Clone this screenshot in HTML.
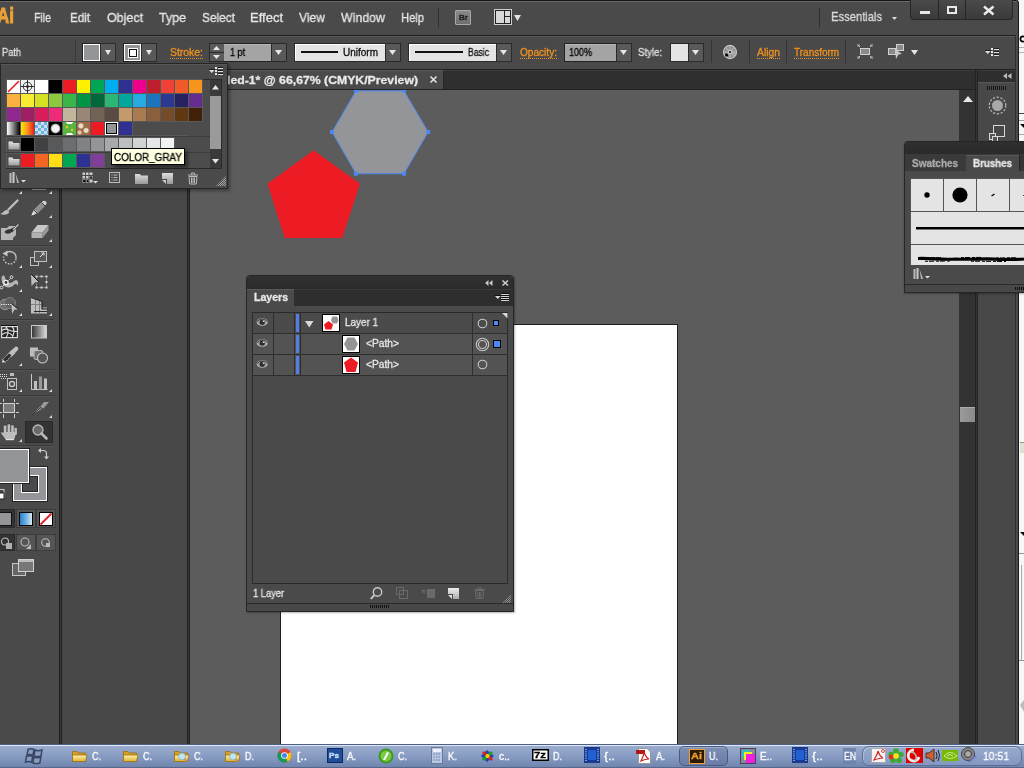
<!DOCTYPE html>
<html><head><meta charset="utf-8">
<style>
*{margin:0;padding:0;box-sizing:border-box}
html,body{width:1024px;height:768px;overflow:hidden;background:#4a4a4a;font-family:"Liberation Sans",sans-serif;position:relative}
.a{position:absolute}
.t{position:absolute;white-space:nowrap;line-height:1;transform-origin:0 0;will-change:transform;-webkit-text-stroke:0.3px currentColor}
svg{overflow:visible}
</style></head><body>
<div class="a" style="left:1018px;top:0px;width:6px;height:744px;background:#f6f6f4;"></div>
<svg class="a" style="left:1019px;top:0px;" width="5" height="744" viewBox="0 0 5 744"><circle cx="4" cy="39" r="2.6" fill="none" stroke="#000" stroke-width="1.6"/><path d="M0 47.5H5M0 52.5H5" stroke="#b8b4a8"/><path d="M0 113.5H5" stroke="#444"/><path d="M0 120.5H5" stroke="#999"/><path d="M1 124L5 128V124Z" fill="#000"/><path d="M0 134.5H5" stroke="#aaa"/><rect x="1" y="442" width="4" height="11" fill="#e2ded2"/><path d="M1 442.5H5" stroke="#999"/><path d="M1 532L5 536V532Z" fill="#000"/><path d="M0 553.5H5" stroke="#999"/><path d="M2.5 565V660" stroke="#aaa"/><path d="M0 660.5H5" stroke="#999"/><path d="M1 705L5 700V712Z" fill="#bbb"/></svg>
<div class="a" style="left:0px;top:0px;width:1019px;height:744px;background:#4a4a4a;border-top-right-radius:6px"></div>
<div class="a" style="left:0px;top:0px;width:1016px;height:1px;background:#141414;"></div>
<div class="a" style="left:0px;top:1px;width:1016px;height:1px;background:#6a6a6a;"></div>
<div class="t" style="left:-3.00px;top:5.38px;font-size:22px;color:#eda238;font-weight:bold;transform:scaleX(0.7727);-webkit-text-stroke:0.9px #eda238;">Ai</div>
<div class="t" style="left:34.00px;top:11.00px;font-size:13px;color:#e6e6e6;transform:scaleX(0.8117);">File</div>
<div class="t" style="left:70.00px;top:11.00px;font-size:13px;color:#e6e6e6;transform:scaleX(0.8929);">Edit</div>
<div class="t" style="left:107.00px;top:11.00px;font-size:13px;color:#e6e6e6;transform:scaleX(0.9582);">Object</div>
<div class="t" style="left:159.00px;top:11.00px;font-size:13px;color:#e6e6e6;transform:scaleX(0.9580);">Type</div>
<div class="t" style="left:202.00px;top:11.00px;font-size:13px;color:#e6e6e6;transform:scaleX(0.9134);">Select</div>
<div class="t" style="left:250.00px;top:11.00px;font-size:13px;color:#e6e6e6;">Effect</div>
<div class="t" style="left:299.00px;top:11.00px;font-size:13px;color:#e6e6e6;transform:scaleX(0.9294);">View</div>
<div class="t" style="left:341.00px;top:11.00px;font-size:13px;color:#e6e6e6;transform:scaleX(0.9510);">Window</div>
<div class="t" style="left:401.00px;top:11.00px;font-size:13px;color:#e6e6e6;transform:scaleX(0.8601);">Help</div>
<div class="a" style="left:438px;top:8px;width:1px;height:20px;background:#303030;"></div>
<div class="a" style="left:455px;top:10px;width:16px;height:15px;background:linear-gradient(#8a8a8a,#6e6e6e);border:1px solid #a8a8a8;border-radius:1px"></div>
<div class="t" style="left:459.00px;top:14.23px;font-size:8px;color:#222;font-weight:bold;transform:scaleX(1.0126);">Br</div>
<div class="a" style="left:494px;top:9px;width:18px;height:16px;background:#222;border:1px solid #cfcfcf"></div>
<div class="a" style="left:496px;top:11px;width:8px;height:12px;background:#d8d8d8;"></div>
<div class="a" style="left:505px;top:11px;width:5px;height:5px;background:#d8d8d8;"></div>
<div class="a" style="left:505px;top:17px;width:5px;height:6px;background:#d8d8d8;"></div>
<svg class="a" style="left:514px;top:15px;" width="8" height="7" viewBox="0 0 8 7"><path d="M0 0H7L3.5 6Z" fill="#e0e0e0"/></svg>
<div class="a" style="left:819px;top:8px;width:1px;height:20px;background:#303030;"></div>
<div class="t" style="left:831.00px;top:10.00px;font-size:13px;color:#dcdcdc;transform:scaleX(0.8607);">Essentials</div>
<svg class="a" style="left:892px;top:17px;" width="6" height="4" viewBox="0 0 6 4"><path d="M0 0H5L2.5 3Z" fill="#e0e0e0"/></svg>
<div class="a" style="left:910px;top:0px;width:103px;height:20px;background:linear-gradient(#4a4a4a,#3a3a3a);border:1px solid #262626;border-top:none;border-radius:0 0 4px 4px"></div>
<div class="a" style="left:938px;top:0px;width:1px;height:19px;background:#262626;"></div>
<div class="a" style="left:965px;top:0px;width:1px;height:19px;background:#262626;"></div>
<div class="a" style="left:920px;top:11px;width:10px;height:3px;background:#e8e8e8;"></div>
<div class="a" style="left:947px;top:6px;width:10px;height:8px;border:2px solid #e8e8e8;border-top-width:2px"></div>
<svg class="a" style="left:983px;top:6px;" width="12" height="9" viewBox="0 0 12 9"><path d="M1 0.5L10.5 8.5M10.5 0.5L1 8.5" stroke="#ececec" stroke-width="2.4"/></svg>
<div class="a" style="left:0px;top:35px;width:1016px;height:1px;background:#202020;"></div>
<div class="a" style="left:0px;top:36px;width:1015px;height:33px;background:#494949;border-top:1px solid #5a5a5a"></div>
<div class="a" style="left:0px;top:69px;width:1016px;height:1px;background:#202020;"></div>
<div class="t" style="left:2.00px;top:47.53px;font-size:10px;color:#e0e0e0;transform:scaleX(0.9237);">Path</div>
<div class="a" style="left:75px;top:40px;width:1px;height:23px;background:#3a3a3a;"></div>
<div class="a" style="left:82px;top:43px;width:19px;height:19px;background:#939598;border:1px solid #222;box-shadow:inset 0 0 0 1px #fff"></div>
<div class="a" style="left:100px;top:43px;width:16px;height:19px;background:#595959;border:1px solid #2c2c2c"></div>
<svg class="a" style="left:105px;top:50px;" width="7" height="5" viewBox="0 0 7 5"><path d="M0 0H6L3 5Z" fill="#e6e6e6"/></svg>
<div class="a" style="left:123px;top:43px;width:19px;height:19px;background:#939598;border:1px solid #222;box-shadow:inset 0 0 0 1px #fff"></div>
<div class="a" style="left:128px;top:48px;width:10px;height:10px;background:#fff;border:1px solid #fff;box-shadow:inset 0 0 0 1px #111"></div>
<div class="a" style="left:141px;top:43px;width:16px;height:19px;background:#595959;border:1px solid #2c2c2c"></div>
<svg class="a" style="left:146px;top:50px;" width="7" height="5" viewBox="0 0 7 5"><path d="M0 0H6L3 5Z" fill="#e6e6e6"/></svg>
<div class="t" style="left:170.00px;top:47.53px;font-size:10px;color:#f0921e;transform:scaleX(1.0417);">Stroke:</div>
<div class="a" style="left:170px;top:58px;width:33px;height:1px;background:repeating-linear-gradient(90deg,#f0921e 0 1px,transparent 1px 2px)"></div>
<div class="a" style="left:209px;top:43px;width:16px;height:19px;background:#5a5a5a;border:1px solid #2a2a2a"></div>
<div class="a" style="left:210px;top:52px;width:14px;height:1px;background:#2a2a2a;"></div>
<svg class="a" style="left:213px;top:46px;" width="8" height="5" viewBox="0 0 8 5"><path d="M0 4H7L3.5 0Z" fill="#e6e6e6"/></svg>
<svg class="a" style="left:213px;top:55px;" width="8" height="5" viewBox="0 0 8 5"><path d="M0 0H7L3.5 4Z" fill="#e6e6e6"/></svg>
<div class="a" style="left:224px;top:43px;width:48px;height:19px;background:#a4a4a4;border:1px solid #222;border-left:none;box-shadow:inset 0 1px 0 #b8b8b8"></div>
<div class="t" style="left:230.00px;top:47.53px;font-size:10px;color:#000;transform:scaleX(0.8993);">1 pt</div>
<div class="a" style="left:271px;top:43px;width:16px;height:19px;background:#595959;border:1px solid #2a2a2a"></div>
<svg class="a" style="left:275px;top:50px;" width="7" height="5" viewBox="0 0 7 5"><path d="M0 0H7L3.5 5Z" fill="#e6e6e6"/></svg>
<div class="a" style="left:294px;top:43px;width:92px;height:19px;background:#e4e4e4;border:1px solid #2a2a2a;box-shadow:inset 1px 1px 0 #fff"></div>
<div class="a" style="left:301px;top:51px;width:37px;height:2px;background:#111;"></div>
<div class="t" style="left:343.00px;top:47.53px;font-size:10px;color:#111;">Uniform</div>
<div class="a" style="left:385px;top:43px;width:16px;height:19px;background:#595959;border:1px solid #2a2a2a"></div>
<svg class="a" style="left:389px;top:50px;" width="7" height="5" viewBox="0 0 7 5"><path d="M0 0H7L3.5 5Z" fill="#e6e6e6"/></svg>
<div class="a" style="left:408px;top:43px;width:89px;height:19px;background:#e4e4e4;border:1px solid #2a2a2a;box-shadow:inset 1px 1px 0 #fff"></div>
<div class="a" style="left:415px;top:51px;width:48px;height:2px;background:#111;"></div>
<div class="t" style="left:468.00px;top:47.53px;font-size:10px;color:#111;transform:scaleX(0.8589);">Basic</div>
<div class="a" style="left:496px;top:43px;width:16px;height:19px;background:#595959;border:1px solid #2a2a2a"></div>
<svg class="a" style="left:500px;top:50px;" width="7" height="5" viewBox="0 0 7 5"><path d="M0 0H7L3.5 5Z" fill="#e6e6e6"/></svg>
<div class="t" style="left:520.00px;top:47.53px;font-size:10px;color:#f0921e;transform:scaleX(1.0087);">Opacity:</div>
<div class="a" style="left:520px;top:58px;width:37px;height:1px;background:repeating-linear-gradient(90deg,#f0921e 0 1px,transparent 1px 2px)"></div>
<div class="a" style="left:564px;top:43px;width:53px;height:19px;background:#a4a4a4;border:1px solid #222;box-shadow:inset 0 1px 0 #b8b8b8"></div>
<div class="t" style="left:569.00px;top:47.53px;font-size:10px;color:#000;transform:scaleX(0.8991);">100%</div>
<div class="a" style="left:616px;top:43px;width:16px;height:19px;background:#595959;border:1px solid #2a2a2a"></div>
<svg class="a" style="left:620px;top:50px;" width="7" height="5" viewBox="0 0 7 5"><path d="M0 0H7L3.5 5Z" fill="#e6e6e6"/></svg>
<div class="t" style="left:638.00px;top:47.53px;font-size:10px;color:#e0e0e0;transform:scaleX(0.9596);">Style:</div>
<div class="a" style="left:670px;top:43px;width:19px;height:19px;background:#e4e4e4;border:1px solid #2a2a2a"></div>
<div class="a" style="left:688px;top:43px;width:16px;height:19px;background:#595959;border:1px solid #2a2a2a"></div>
<svg class="a" style="left:692px;top:50px;" width="7" height="5" viewBox="0 0 7 5"><path d="M0 0H7L3.5 5Z" fill="#e6e6e6"/></svg>
<div class="a" style="left:711px;top:40px;width:1px;height:23px;background:#353535;"></div>
<svg class="a" style="left:722px;top:44px;" width="16" height="16" viewBox="0 0 16 16"><circle cx="8" cy="7.6" r="7.2" fill="#222" opacity="0.6"/><circle cx="8" cy="8" r="6.6" fill="#8c8c8c" stroke="#c8c8c8" stroke-width="1.1"/><path d="M8 2V14M2 8H14M3.8 3.8L12.2 12.2M12.2 3.8L3.8 12.2" stroke="#b0b0b0" stroke-width="1.4"/><path d="M8 8L13.8 6A6 6 0 0 1 13 11.5Z" fill="#aaa"/><circle cx="8" cy="8" r="1.8" fill="#ddd"/><circle cx="8" cy="8" r="1.1" fill="#111"/><circle cx="4.6" cy="11" r="1.6" fill="#000"/></svg>
<div class="a" style="left:749px;top:40px;width:1px;height:23px;background:#353535;"></div>
<div class="t" style="left:757.00px;top:47.53px;font-size:10px;color:#f0921e;transform:scaleX(1.0342);">Align</div>
<div class="a" style="left:757px;top:58px;width:23px;height:1px;background:repeating-linear-gradient(90deg,#f0921e 0 1px,transparent 1px 2px)"></div>
<div class="a" style="left:786px;top:40px;width:1px;height:23px;background:#353535;"></div>
<div class="t" style="left:794.00px;top:47.53px;font-size:10px;color:#f0921e;">Transform</div>
<div class="a" style="left:794px;top:58px;width:45px;height:1px;background:repeating-linear-gradient(90deg,#f0921e 0 1px,transparent 1px 2px)"></div>
<div class="a" style="left:845px;top:40px;width:1px;height:23px;background:#353535;"></div>
<svg class="a" style="left:857px;top:44px;" width="16" height="15" viewBox="0 0 16 15"><rect x="3.5" y="4.5" width="9" height="6" fill="#8a8a8a" stroke="#d0d0d0"/><path d="M0.5 0.5L3 3M15.5 0.5L13 3M0.5 14.5L3 12M15.5 14.5L13 12" stroke="#d0d0d0"/><path d="M0 2H2V0M16 2H14V0M0 13H2V15M16 13H14V15" stroke="#bbb" fill="none" stroke-width="0.8"/></svg>
<svg class="a" style="left:888px;top:44px;" width="17" height="15" viewBox="0 0 17 15"><rect x="0.5" y="4.5" width="7" height="6" fill="#8a8a8a" stroke="#d0d0d0"/><rect x="8.5" y="0.5" width="7" height="6" fill="#8a8a8a" stroke="#d0d0d0"/><path d="M7 5L14 10L10.5 10.5L8 15Z" fill="#c8c8c8"/></svg>
<svg class="a" style="left:911px;top:50px;" width="7" height="5" viewBox="0 0 7 5"><path d="M0 0H7L3.5 5Z" fill="#e6e6e6"/></svg>
<svg class="a" style="left:985px;top:48px;" width="15" height="9" viewBox="0 0 15 9"><rect x="0" y="2" width="6" height="1" fill="#1e1e1e"/><path d="M0 3H5.5L2.75 6Z" fill="#e0e0e0"/><rect x="6" y="0" width="2" height="2" fill="#e6e6e6"/><rect x="6" y="3" width="2" height="2" fill="#e6e6e6"/><rect x="6" y="6" width="2" height="2" fill="#e6e6e6"/><rect x="9" y="0" width="5" height="1" fill="#1e1e1e"/><rect x="9" y="3" width="5" height="1" fill="#1e1e1e"/><rect x="9" y="6" width="5" height="1" fill="#1e1e1e"/><rect x="9" y="1" width="5" height="1" fill="#e0e0e0"/><rect x="9" y="4" width="5" height="1" fill="#e0e0e0"/><rect x="9" y="7" width="5" height="1" fill="#e0e0e0"/></svg>
<div class="a" style="left:62px;top:70px;width:915px;height:20px;background:#2f2f2f;border-top:1px solid #3a3a3a;border-bottom:1px solid #232323"></div>
<div class="a" style="left:62px;top:70px;width:382px;height:19px;background:#4a4a4a;border-top:1px solid #5a5a5a;border-right:1px solid #262626"></div>
<div class="t" style="left:227.00px;top:74.69px;font-size:11px;color:#e8e8e8;font-weight:bold;transform:scaleX(1.1136);">led-1* @ 66,67% (CMYK/Preview)</div>
<svg class="a" style="left:430px;top:76px;" width="7" height="7" viewBox="0 0 7 7"><path d="M0.5 0.5L6.5 6.5M6.5 0.5L0.5 6.5" stroke="#e0e0e0" stroke-width="1.6"/></svg>
<div class="a" style="left:0px;top:70px;width:59px;height:674px;background:#4a4a4a;"></div>
<div class="a" style="left:59px;top:70px;width:1px;height:674px;background:#222;"></div>
<div class="a" style="left:60px;top:70px;width:1px;height:674px;background:#353535;"></div>
<div class="a" style="left:61px;top:70px;width:1px;height:674px;background:#222;"></div>
<div class="a" style="left:62px;top:90px;width:125px;height:654px;background:#474747;"></div>
<div class="a" style="left:187px;top:90px;width:1px;height:654px;background:#202020;"></div>
<div class="a" style="left:188px;top:90px;width:1px;height:654px;background:#353535;"></div>
<div class="a" style="left:189px;top:90px;width:1px;height:654px;background:#202020;"></div>
<div class="a" style="left:190px;top:90px;width:769px;height:654px;background:#5c5c5c;"></div>
<div class="a" style="left:280px;top:324px;width:398px;height:420px;background:#ffffff;border-left:1px solid #1e1e1e;border-top:1px solid #1e1e1e;border-right:1px solid #1e1e1e"></div>
<div class="a" style="left:959px;top:90px;width:17px;height:654px;background:#333333;"></div>
<svg class="a" style="left:963px;top:96px;" width="10" height="6" viewBox="0 0 10 6"><path d="M0 6H10L5 0Z" fill="#e8e8e8"/></svg>
<div class="a" style="left:960px;top:407px;width:15px;height:15px;background:linear-gradient(90deg,#9a9a9a,#8a8a8a);border-top:1px solid #aaa"></div>
<div class="a" style="left:975px;top:70px;width:1px;height:674px;background:#222;"></div>
<div class="a" style="left:976px;top:70px;width:1px;height:674px;background:#353535;"></div>
<div class="a" style="left:977px;top:70px;width:1px;height:674px;background:#222;"></div>
<div class="a" style="left:978px;top:70px;width:37px;height:674px;background:#484848;"></div>
<div class="a" style="left:978px;top:70px;width:37px;height:12px;background:#2e2e2e;border-top:1px solid #3c3c3c"></div>
<div class="a" style="left:978px;top:82px;width:37px;height:1px;background:#585858;"></div>
<svg class="a" style="left:1003px;top:73px;" width="9" height="6" viewBox="0 0 9 6"><path d="M0 3L4 0V6ZM4.5 3L8.5 0V6Z" fill="#bbb"/></svg>
<div class="a" style="left:987px;top:86px;width:20px;height:4px;background:repeating-linear-gradient(90deg,#151515 0 1px,transparent 1px 2px)"></div>
<svg class="a" style="left:988px;top:96px;" width="19" height="19" viewBox="0 0 19 19"><circle cx="9.5" cy="9.5" r="8.3" fill="none" stroke="#bdbdbd" stroke-width="1.2" stroke-dasharray="2.2 1.6"/><circle cx="9.5" cy="9.5" r="5.5" fill="#a8a8a8"/></svg>
<svg class="a" style="left:989px;top:125px;" width="17" height="17" viewBox="0 0 17 17"><rect x="4.5" y="0.5" width="11" height="11" fill="none" stroke="#d8d8d8"/><rect x="0.5" y="8.5" width="6" height="6" fill="#555" stroke="#d8d8d8"/><rect x="3.5" y="11.5" width="5" height="5" fill="#555" stroke="#d8d8d8"/></svg>
<div class="a" style="left:1015px;top:35px;width:1px;height:709px;background:#2e2e2e;"></div>
<div class="a" style="left:1016px;top:0px;width:3px;height:744px;background:#4a4a4a;border-top-right-radius:5px;border-right:1px solid #1a1a1a"></div>
<div class="a" style="left:0px;top:744px;width:1024px;height:24px;background:linear-gradient(#a3b3d3 0,#98aacb 10%,#879bc2 50%,#6d83ad 100%);border-top:1px solid #4e5f85"></div>
<div class="a" style="left:0px;top:745px;width:1024px;height:1px;background:#dfe6f3;"></div>
<div class="a" style="left:0px;top:767px;width:1024px;height:1px;background:#56678c;"></div>
<div class="a" style="left:190px;top:90px;width:769px;height:654px;overflow:hidden">
<svg class="a" style="left:-190px;top:-90px;" width="1024" height="768" viewBox="0 0 1024 768"><polygon points="313.6,150.2 360,183.8 342.3,238.1 284.7,238.1 267.5,183.8" fill="#ed1c24"/><polygon points="356,90.8 404,90.8 428.2,132 404,173.7 356,173.7 332,132" fill="#939598" stroke="#4d88f5" stroke-width="1"/><rect x="354" y="88.8" width="4" height="4" fill="#4d88f5"/><rect x="402" y="88.8" width="4" height="4" fill="#4d88f5"/><rect x="426.2" y="130" width="4" height="4" fill="#4d88f5"/><rect x="402" y="171.7" width="4" height="4" fill="#4d88f5"/><rect x="354" y="171.7" width="4" height="4" fill="#4d88f5"/><rect x="330" y="130" width="4" height="4" fill="#4d88f5"/></svg>
</div>
<div class="a" style="left:0px;top:63px;width:228px;height:126px;background:#4a4a4a;border:1px solid #262626;box-shadow:2px 2px 3px rgba(0,0,0,0.35)"></div>
<div class="a" style="left:1px;top:64px;width:226px;height:1px;background:#575757;"></div>
<svg class="a" style="left:209px;top:67px;" width="15" height="9" viewBox="0 0 15 9"><rect x="0" y="2" width="6" height="1" fill="#1e1e1e"/><path d="M0 3H5.5L2.75 6Z" fill="#e0e0e0"/><rect x="6" y="0" width="2" height="2" fill="#e6e6e6"/><rect x="6" y="3" width="2" height="2" fill="#e6e6e6"/><rect x="6" y="6" width="2" height="2" fill="#e6e6e6"/><rect x="9" y="0" width="5" height="1" fill="#1e1e1e"/><rect x="9" y="3" width="5" height="1" fill="#1e1e1e"/><rect x="9" y="6" width="5" height="1" fill="#1e1e1e"/><rect x="9" y="1" width="5" height="1" fill="#e0e0e0"/><rect x="9" y="4" width="5" height="1" fill="#e0e0e0"/><rect x="9" y="7" width="5" height="1" fill="#e0e0e0"/></svg>
<div class="a" style="left:6px;top:79px;width:216px;height:90px;background:#4c4c4c;border:1px solid #2a2a2a"></div>
<div class="a" style="left:6px;top:79px;width:197px;height:15px;background:#595959;"></div>
<div class="a" style="left:6px;top:93px;width:197px;height:15px;background:#595959;"></div>
<div class="a" style="left:6px;top:107px;width:197px;height:15px;background:#595959;"></div>
<div class="a" style="left:6px;top:121px;width:127px;height:15px;background:#595959;"></div>
<div class="a" style="left:7px;top:80px;width:13px;height:13px;background:#fff;"></div>
<svg class="a" style="left:7px;top:80px;" width="13" height="13" viewBox="0 0 13 13"><path d="M1.5 11.5L11.5 1.5" stroke="#ed1c24" stroke-width="1.6" stroke-linecap="round"/></svg>
<div class="a" style="left:21px;top:80px;width:13px;height:13px;background:#f0f0f0;"></div>
<svg class="a" style="left:21px;top:80px;" width="13" height="13" viewBox="0 0 13 13"><circle cx="6.5" cy="6.5" r="4.3" fill="none" stroke="#222" stroke-width="0.9"/><circle cx="6.5" cy="6.5" r="1.2" fill="none" stroke="#222" stroke-width="0.8"/><path d="M6.5 0V13M0 6.5H13" stroke="#222" stroke-width="0.9"/></svg>
<div class="a" style="left:35px;top:80px;width:13px;height:13px;background:#ffffff;"></div>
<div class="a" style="left:49px;top:80px;width:13px;height:13px;background:#000000;"></div>
<div class="a" style="left:63px;top:80px;width:13px;height:13px;background:#ed1c24;"></div>
<div class="a" style="left:77px;top:80px;width:13px;height:13px;background:#fff200;"></div>
<div class="a" style="left:91px;top:80px;width:13px;height:13px;background:#00a651;"></div>
<div class="a" style="left:105px;top:80px;width:13px;height:13px;background:#00aeef;"></div>
<div class="a" style="left:119px;top:80px;width:13px;height:13px;background:#2e3192;"></div>
<div class="a" style="left:133px;top:80px;width:13px;height:13px;background:#ec008c;"></div>
<div class="a" style="left:147px;top:80px;width:13px;height:13px;background:#be1e2d;"></div>
<div class="a" style="left:161px;top:80px;width:13px;height:13px;background:#ef4136;"></div>
<div class="a" style="left:175px;top:80px;width:13px;height:13px;background:#f15a29;"></div>
<div class="a" style="left:189px;top:80px;width:13px;height:13px;background:#f7941d;"></div>
<div class="a" style="left:7px;top:94px;width:13px;height:13px;background:#fbb040;"></div>
<div class="a" style="left:21px;top:94px;width:13px;height:13px;background:#f9ed32;"></div>
<div class="a" style="left:35px;top:94px;width:13px;height:13px;background:#d7df23;"></div>
<div class="a" style="left:49px;top:94px;width:13px;height:13px;background:#8dc63f;"></div>
<div class="a" style="left:63px;top:94px;width:13px;height:13px;background:#39b54a;"></div>
<div class="a" style="left:77px;top:94px;width:13px;height:13px;background:#009444;"></div>
<div class="a" style="left:91px;top:94px;width:13px;height:13px;background:#006838;"></div>
<div class="a" style="left:105px;top:94px;width:13px;height:13px;background:#2bb673;"></div>
<div class="a" style="left:119px;top:94px;width:13px;height:13px;background:#00a79d;"></div>
<div class="a" style="left:133px;top:94px;width:13px;height:13px;background:#27aae1;"></div>
<div class="a" style="left:147px;top:94px;width:13px;height:13px;background:#1c75bc;"></div>
<div class="a" style="left:161px;top:94px;width:13px;height:13px;background:#2b3990;"></div>
<div class="a" style="left:175px;top:94px;width:13px;height:13px;background:#262262;"></div>
<div class="a" style="left:189px;top:94px;width:13px;height:13px;background:#662d91;"></div>
<div class="a" style="left:7px;top:108px;width:13px;height:13px;background:#92278f;"></div>
<div class="a" style="left:21px;top:108px;width:13px;height:13px;background:#9e1f63;"></div>
<div class="a" style="left:35px;top:108px;width:13px;height:13px;background:#da1c5c;"></div>
<div class="a" style="left:49px;top:108px;width:13px;height:13px;background:#ee2a7b;"></div>
<div class="a" style="left:63px;top:108px;width:13px;height:13px;background:#c2b59b;"></div>
<div class="a" style="left:77px;top:108px;width:13px;height:13px;background:#998675;"></div>
<div class="a" style="left:91px;top:108px;width:13px;height:13px;background:#736357;"></div>
<div class="a" style="left:105px;top:108px;width:13px;height:13px;background:#594a42;"></div>
<div class="a" style="left:119px;top:108px;width:13px;height:13px;background:#c49a6c;"></div>
<div class="a" style="left:133px;top:108px;width:13px;height:13px;background:#a97c50;"></div>
<div class="a" style="left:147px;top:108px;width:13px;height:13px;background:#8b5e3c;"></div>
<div class="a" style="left:161px;top:108px;width:13px;height:13px;background:#754c29;"></div>
<div class="a" style="left:175px;top:108px;width:13px;height:13px;background:#603913;"></div>
<div class="a" style="left:189px;top:108px;width:13px;height:13px;background:#42210b;"></div>
<div class="a" style="left:7px;top:122px;width:13px;height:13px;background:linear-gradient(90deg,#fff,#000);"></div>
<div class="a" style="left:21px;top:122px;width:13px;height:13px;background:linear-gradient(90deg,#ffe600,#f7941d 50%,#ed1c24);"></div>
<div class="a" style="left:35px;top:122px;width:13px;height:13px;background:repeating-conic-gradient(#6fb0e0 0 25%,#c9e3f5 0 50%) 0 0/6px 6px;"></div>
<div class="a" style="left:49px;top:122px;width:13px;height:13px;background:radial-gradient(circle,#f4f4f4 0 35%,#bbb 45%,#000 58%);"></div>
<div class="a" style="left:63px;top:122px;width:13px;height:13px;background:radial-gradient(ellipse 40% 25% at 50% 0,#fff 60%,transparent 70%),radial-gradient(ellipse 40% 25% at 50% 100%,#fff 60%,transparent 70%),radial-gradient(circle at 30% 40%,#f7c21a 0 10%,transparent 12%),radial-gradient(circle at 70% 60%,#f7c21a 0 10%,transparent 12%),#58b540;"></div>
<div class="a" style="left:77px;top:122px;width:13px;height:13px;background:radial-gradient(circle at 30% 30%,#eadccc 0 15%,transparent 25%),radial-gradient(circle at 70% 65%,#eadccc 0 15%,transparent 25%),radial-gradient(circle at 20% 80%,#e0c8b0 0 10%,transparent 18%),#a06c45;"></div>
<div class="a" style="left:91px;top:122px;width:13px;height:13px;background:#ed1c24;"></div>
<div class="a" style="left:105px;top:122px;width:13px;height:13px;background:#939598;border:1px solid #fff;box-shadow:inset 0 0 0 1px #000"></div>
<div class="a" style="left:119px;top:122px;width:13px;height:13px;background:#2e3192;"></div>
<div class="a" style="left:7px;top:135px;width:182px;height:1px;background:#595959;"></div>
<div class="a" style="left:6px;top:136px;width:216px;height:1px;background:#3c3c3c;"></div>
<div class="a" style="left:6px;top:137px;width:169px;height:15px;background:#595959;"></div>
<div class="a" style="left:7px;top:138px;width:13px;height:13px;background:#4a4a4a;"></div>
<div class="a" style="left:21px;top:138px;width:13px;height:13px;background:#000000;"></div>
<div class="a" style="left:35px;top:138px;width:13px;height:13px;background:#414042;"></div>
<div class="a" style="left:49px;top:138px;width:13px;height:13px;background:#58595b;"></div>
<div class="a" style="left:63px;top:138px;width:13px;height:13px;background:#6d6e71;"></div>
<div class="a" style="left:77px;top:138px;width:13px;height:13px;background:#808285;"></div>
<div class="a" style="left:91px;top:138px;width:13px;height:13px;background:#939598;"></div>
<div class="a" style="left:105px;top:138px;width:13px;height:13px;background:#a7a9ac;"></div>
<div class="a" style="left:119px;top:138px;width:13px;height:13px;background:#bcbec0;"></div>
<div class="a" style="left:133px;top:138px;width:13px;height:13px;background:#d1d3d4;"></div>
<div class="a" style="left:147px;top:138px;width:13px;height:13px;background:#e6e7e8;"></div>
<div class="a" style="left:161px;top:138px;width:13px;height:13px;background:#f1f2f2;"></div>
<div class="a" style="left:6px;top:152px;width:216px;height:1px;background:#3c3c3c;"></div>
<div class="a" style="left:6px;top:153px;width:99px;height:15px;background:#595959;"></div>
<div class="a" style="left:7px;top:154px;width:13px;height:13px;background:#4a4a4a;"></div>
<div class="a" style="left:21px;top:154px;width:13px;height:13px;background:#ed1c24;"></div>
<div class="a" style="left:35px;top:154px;width:13px;height:13px;background:#f26522;"></div>
<div class="a" style="left:49px;top:154px;width:13px;height:13px;background:#ffde17;"></div>
<div class="a" style="left:63px;top:154px;width:13px;height:13px;background:#00a651;"></div>
<div class="a" style="left:77px;top:154px;width:13px;height:13px;background:#2e3192;"></div>
<div class="a" style="left:91px;top:154px;width:13px;height:13px;background:#7f3f98;"></div>
<svg class="a" style="left:8px;top:140px;" width="12" height="10" viewBox="0 0 12 10"><defs><linearGradient id="fg" x1="0" y1="0" x2="0" y2="1"><stop offset="0" stop-color="#e8e8e8"/><stop offset="1" stop-color="#9a9a9a"/></linearGradient></defs><path d="M0.5 1.5H4.5L5.5 3H11.5V9.5H0.5Z" fill="url(#fg)"/></svg>
<svg class="a" style="left:8px;top:156px;" width="12" height="10" viewBox="0 0 12 10"><defs><linearGradient id="fg" x1="0" y1="0" x2="0" y2="1"><stop offset="0" stop-color="#e8e8e8"/><stop offset="1" stop-color="#9a9a9a"/></linearGradient></defs><path d="M0.5 1.5H4.5L5.5 3H11.5V9.5H0.5Z" fill="url(#fg)"/></svg>
<div class="a" style="left:210px;top:80px;width:11px;height:88px;background:#3a3a3a;"></div>
<div class="a" style="left:210px;top:80px;width:11px;height:15px;background:#3a3a3a;"></div>
<svg class="a" style="left:212px;top:85px;" width="7" height="5" viewBox="0 0 7 5"><path d="M0 4.5H7L3.5 0Z" fill="#e8e8e8"/></svg>
<div class="a" style="left:210px;top:96px;width:11px;height:53px;background:#9a9a9a;"></div>
<svg class="a" style="left:212px;top:159px;" width="7" height="5" viewBox="0 0 7 5"><path d="M0 0H7L3.5 4.5Z" fill="#e8e8e8"/></svg>
<svg class="a" style="left:9px;top:172px;" width="19" height="12" viewBox="0 0 19 12"><rect x="0.5" y="1" width="2" height="10" fill="#bbb"/><rect x="3.5" y="0" width="2" height="11" fill="#ccc"/><path d="M6.5 1L10 11H8Z" fill="#bbb"/><path d="M12 8H17L14.5 10.5Z" fill="#ddd"/></svg>
<svg class="a" style="left:82px;top:172px;" width="17" height="13" viewBox="0 0 17 13"><rect x="0.5" y="0.5" width="10" height="10" fill="#ccc"/><path d="M3.5 0V11M7 0V11M0 3.5H11M0 7H11" stroke="#4a4a4a"/><rect x="1" y="8" width="2" height="2" fill="#111"/><rect x="4.5" y="8" width="2" height="2" fill="#111"/><rect x="8" y="4.5" width="2" height="2" fill="#111"/><path d="M11 9H16L13.5 11.5Z" fill="#ddd"/></svg>
<svg class="a" style="left:109px;top:172px;" width="12" height="12" viewBox="0 0 12 12"><rect x="0.5" y="0.5" width="10" height="10" fill="none" stroke="#bbb"/><path d="M2.5 3H3.5M2.5 5.5H3.5M2.5 8H3.5M4.5 3H8.5M4.5 5.5H8.5M4.5 8H8.5" stroke="#bbb"/></svg>
<svg class="a" style="left:135px;top:173px;" width="13" height="11" viewBox="0 0 13 11"><defs><linearGradient id="fg2" x1="0" y1="0" x2="0" y2="1"><stop offset="0" stop-color="#ddd"/><stop offset="1" stop-color="#999"/></linearGradient></defs><path d="M0 1H5L6 2.5H13V11H0Z" fill="url(#fg2)"/></svg>
<svg class="a" style="left:162px;top:173px;" width="11" height="11" viewBox="0 0 11 11"><defs><linearGradient id="ng" x1="0" y1="0" x2="0" y2="1"><stop offset="0" stop-color="#ddd"/><stop offset="1" stop-color="#999"/></linearGradient></defs><path d="M0 0H11V11H5V6H0Z" fill="url(#ng)"/><path d="M0 7L4 11V7Z" fill="#ccc"/></svg>
<svg class="a" style="left:187px;top:172px;" width="12" height="13" viewBox="0 0 12 13"><path d="M1 3H11M4.5 2.5V1H7.5V2.5" stroke="#bbb" fill="none"/><path d="M2 4.5H10L9.3 12H2.7Z" fill="none" stroke="#bbb"/><path d="M4.5 5.5V11M6 5.5V11M7.5 5.5V11" stroke="#bbb"/></svg>
<div class="a" style="left:216px;top:176px;width:10px;height:10px;background:repeating-conic-gradient(#aaa 0 25%,transparent 0 50%) 0 0/2px 2px;clip-path:polygon(100% 0,100% 100%,0 100%)"></div>
<div class="a" style="left:111px;top:148px;width:74px;height:17px;background:#ffffe1;border:1px solid #000;box-shadow:3px 3px 3px rgba(0,0,0,0.4)"></div>
<div class="t" style="left:114.00px;top:152.53px;font-size:10px;color:#000;transform:scaleX(0.9895);">COLOR_GRAY</div>
<div class="a" style="left:32px;top:189px;width:14px;height:1px;background:#777;"></div>
<svg class="a" style="left:19px;top:191px;" width="3" height="3" viewBox="0 0 3 3"><path d="M3 0V3H0Z" fill="#dcdcdc"/></svg>
<svg class="a" style="left:49px;top:191px;" width="3" height="3" viewBox="0 0 3 3"><path d="M3 0V3H0Z" fill="#dcdcdc"/></svg>
<svg class="a" style="left:49px;top:215px;" width="3" height="3" viewBox="0 0 3 3"><path d="M3 0V3H0Z" fill="#dcdcdc"/></svg>
<svg class="a" style="left:49px;top:239px;" width="3" height="3" viewBox="0 0 3 3"><path d="M3 0V3H0Z" fill="#dcdcdc"/></svg>
<svg class="a" style="left:19px;top:265px;" width="3" height="3" viewBox="0 0 3 3"><path d="M3 0V3H0Z" fill="#dcdcdc"/></svg>
<svg class="a" style="left:49px;top:265px;" width="3" height="3" viewBox="0 0 3 3"><path d="M3 0V3H0Z" fill="#dcdcdc"/></svg>
<svg class="a" style="left:19px;top:289px;" width="3" height="3" viewBox="0 0 3 3"><path d="M3 0V3H0Z" fill="#dcdcdc"/></svg>
<svg class="a" style="left:19px;top:313px;" width="3" height="3" viewBox="0 0 3 3"><path d="M3 0V3H0Z" fill="#dcdcdc"/></svg>
<svg class="a" style="left:49px;top:313px;" width="3" height="3" viewBox="0 0 3 3"><path d="M3 0V3H0Z" fill="#dcdcdc"/></svg>
<svg class="a" style="left:19px;top:363px;" width="3" height="3" viewBox="0 0 3 3"><path d="M3 0V3H0Z" fill="#dcdcdc"/></svg>
<svg class="a" style="left:19px;top:389px;" width="3" height="3" viewBox="0 0 3 3"><path d="M3 0V3H0Z" fill="#dcdcdc"/></svg>
<svg class="a" style="left:49px;top:389px;" width="3" height="3" viewBox="0 0 3 3"><path d="M3 0V3H0Z" fill="#dcdcdc"/></svg>
<svg class="a" style="left:49px;top:415px;" width="3" height="3" viewBox="0 0 3 3"><path d="M3 0V3H0Z" fill="#dcdcdc"/></svg>
<svg class="a" style="left:19px;top:439px;" width="3" height="3" viewBox="0 0 3 3"><path d="M3 0V3H0Z" fill="#dcdcdc"/></svg>
<svg class="a" style="left:0px;top:199px;" width="19" height="17" viewBox="0 0 19 17"><path d="M17.5 1.5L8.5 10.5" stroke="#bdbdbd" stroke-width="2.4" stroke-linecap="round"/><path d="M0 15C2.5 14.5 3.5 12 6 11C8 10.5 9.5 12 9 13.5C8 15.5 5 16.5 0 15Z" fill="#bdbdbd"/></svg>
<svg class="a" style="left:31px;top:200px;" width="16" height="17" viewBox="0 0 16 17"><path d="M0.5 15.5L2.5 10.5L11.5 1.5Q13.5 0 15 1.5Q16.5 3 15 4.5L5.5 13.5Z" fill="#cfcfcf"/><path d="M3.5 9.5L10.5 2.5L14 6L7 13Z" fill="#8f8f8f"/><path d="M3 10L6 13M10.5 2.5L14 6" stroke="#2a2a2a" stroke-width="0.9"/><path d="M0.5 15.5L1.8 12.3L3.7 14.2Z" fill="#e8e8e8"/></svg>
<svg class="a" style="left:1px;top:224px;" width="19" height="16" viewBox="0 0 19 16"><path d="M0 4H6L8 2H15V11L12 14V16H0Z" fill="#b5b5b5"/><path d="M4 8.5C6 6 9 6 11 7L18 0.5" stroke="#333" stroke-width="2"/><path d="M4 9C6 6.5 9 6.5 11 7.5C10 9.5 7 10.5 4 9Z" fill="#333"/><path d="M12 6L17.5 0.5" stroke="#ccc" stroke-width="1.2"/></svg>
<svg class="a" style="left:31px;top:224px;" width="18" height="15" viewBox="0 0 18 15"><path d="M0.5 8.5L6.5 1H17.5L11.5 8.5Z" fill="#c8c8c8"/><path d="M0.5 8.5H11.5V14H0.5Z" fill="#b0b0b0"/><path d="M11.5 8.5L17.5 1V6.5L11.5 14Z" fill="#999"/></svg>
<div class="a" style="left:0px;top:245px;width:54px;height:1px;background:#3a3a3a;"></div>
<div class="a" style="left:0px;top:246px;width:54px;height:1px;background:#535353;"></div>
<svg class="a" style="left:1px;top:250px;" width="16" height="16" viewBox="0 0 16 16"><path d="M4.5 3.2A6.3 6.3 0 0 1 15 8.5" fill="none" stroke="#c0c0c0" stroke-width="1.4"/><path d="M15 8.8A6.3 6.3 0 1 1 2.6 6.5" fill="none" stroke="#c0c0c0" stroke-width="1.5" stroke-dasharray="1.6 1.4"/><path d="M1.5 3.5L6.5 0.5V6.5Z" fill="#c8c8c8"/></svg>
<svg class="a" style="left:30px;top:250px;" width="17" height="16" viewBox="0 0 17 16"><rect x="0.5" y="7.5" width="8" height="8" fill="none" stroke="#c0c0c0"/><rect x="4.5" y="1.5" width="12" height="10" fill="#575757" stroke="#c0c0c0"/><path d="M10 7L14 3M11.5 3H14V5.5" stroke="#e0e0e0" fill="none"/></svg>
<svg class="a" style="left:0px;top:274px;" width="19" height="16" viewBox="0 0 19 16"><path d="M1.5 4C1.5 1 4.5 0.5 5 3C5.5 6 7 9 10 9C13 9 14 6 16 6C18 6 18.5 9 18 12C17 10 16 9.5 14.5 10.5C12 13 9 14 6 13C3 12 1.5 8 1.5 4Z" fill="#b4b4b4"/><path d="M1.5 13.5L11.5 3.5" stroke="#eee" stroke-width="0.9" stroke-dasharray="1.3 0.8"/><circle cx="6" cy="8.5" r="2.1" fill="#333" stroke="#f0f0f0" stroke-width="1.3"/><circle cx="11.5" cy="3.2" r="1.4" fill="#444" stroke="#eee" stroke-width="0.9"/><circle cx="1.5" cy="13.5" r="1.4" fill="#444" stroke="#eee" stroke-width="0.9"/></svg>
<svg class="a" style="left:31px;top:274px;" width="17" height="15" viewBox="0 0 17 15"><path d="M5.5 2.5H15.5V13.5H5.5Z" fill="none" stroke="#ccc" stroke-width="0.8" stroke-dasharray="1 1"/><g fill="#d8d8d8"><rect x="4.5" y="1.5" width="2" height="2"/><rect x="9.5" y="1.5" width="2" height="2"/><rect x="14.5" y="1.5" width="2" height="2"/><rect x="14.5" y="7" width="2" height="2"/><rect x="14.5" y="12.5" width="2" height="2"/><rect x="9.5" y="12.5" width="2" height="2"/><rect x="4.5" y="12.5" width="2" height="2"/></g><path d="M0 0L8 8H4.5L0.5 12Z" fill="#bdbdbd"/><path d="M0 0L8 8" stroke="#1a1a1a" stroke-width="1"/></svg>
<svg class="a" style="left:0px;top:297px;" width="20" height="18" viewBox="0 0 20 18"><circle cx="5" cy="7.5" r="5.2" fill="#6e6e6e" stroke="#9a9a9a" stroke-width="1"/><circle cx="10" cy="6" r="5.5" fill="#5e5e5e" stroke="#7d7d7d" stroke-width="1"/><path d="M1 7.5H12" stroke="#f0f0f0" stroke-width="1.2" stroke-dasharray="1.2 1.1"/><path d="M11.5 6.5L18.5 12.5H14.5L12 17Z" fill="#c0c0c0"/><path d="M11.5 6.5L18.5 12.5" stroke="#1a1a1a" stroke-width="1"/></svg>
<svg class="a" style="left:31px;top:297px;" width="17" height="17" viewBox="0 0 17 17"><path d="M0 0.5L11 4.5V10.5H16V16.5H0Z" fill="#bdbdbd"/><path d="M4.5 1.5V16M8.5 3V16M0 7.5H11" stroke="#7a7a7a" stroke-width="0.9"/><path d="M11 4.5V12H16.5" stroke="#1a1a1a" fill="none" stroke-width="1.1"/><path d="M0 0.5L11 4.5" stroke="#1a1a1a" stroke-width="0.9"/><path d="M3 14.5H16" stroke="#1a1a1a" stroke-width="0.9"/></svg>
<div class="a" style="left:0px;top:319px;width:54px;height:1px;background:#3a3a3a;"></div>
<div class="a" style="left:0px;top:320px;width:54px;height:1px;background:#535353;"></div>
<svg class="a" style="left:1px;top:325px;" width="17" height="14" viewBox="0 0 17 14"><rect x="0" y="0" width="16" height="1" fill="#111"/><rect x="0.6" y="1.6" width="15.8" height="11" fill="#262626" stroke="#d8d8d8" stroke-width="1.2"/><path d="M1 5.5Q4 3.5 6.5 4.5Q10 6 13 6.5H16M1 9.5Q4 7.5 6.5 7.5Q9 8 12 11M4.5 1.5Q6.5 3 7 6Q7.5 9 5 13M11 1.5Q13.5 4 13 7Q12.5 10 11 13" stroke="#e0e0e0" fill="none" stroke-width="1.1"/></svg>
<svg class="a" style="left:31px;top:325px;" width="16" height="14" viewBox="0 0 16 14"><defs><linearGradient id="tg" x1="0" x2="1"><stop offset="0" stop-color="#333"/><stop offset="1" stop-color="#ddd"/></linearGradient></defs><rect x="0.5" y="0.5" width="15" height="12.5" fill="url(#tg)" stroke="#c8c8c8"/></svg>
<svg class="a" style="left:0px;top:344px;" width="20" height="20" viewBox="0 0 20 20"><path d="M13.2 7.8L16.2 4.8" stroke="#c2c2c2" stroke-width="4.2" stroke-linecap="round"/><path d="M8 9.5L12 5.5L15.5 9L11.5 13Z" fill="#bcbcbc"/><path d="M2.2 16L9.2 9L11.8 11.6L4.8 18.6Z" fill="#2e2e2e" stroke="#e0e0e0" stroke-width="0.9" stroke-dasharray="1.2 0.6"/><path d="M1.8 18.8L3 15.8L5 17.8Z" fill="#f0f0f0"/></svg>
<svg class="a" style="left:30px;top:347px;" width="19" height="17" viewBox="0 0 19 17"><rect x="0" y="0.5" width="8" height="9" fill="#bdbdbd"/><rect x="4" y="3.5" width="9" height="9" rx="2" fill="#6f6f6f" stroke="#bbb"/><circle cx="12.5" cy="11" r="5" fill="#555" stroke="#c8c8c8" stroke-width="1.1"/></svg>
<div class="a" style="left:0px;top:369px;width:54px;height:1px;background:#3a3a3a;"></div>
<div class="a" style="left:0px;top:370px;width:54px;height:1px;background:#535353;"></div>
<svg class="a" style="left:0px;top:373px;" width="18" height="17" viewBox="0 0 18 17"><path d="M0 1.5H8M0 3.5H8M1 5.5H6" stroke="#ddd" stroke-dasharray="1 1"/><rect x="10" y="0" width="4" height="3" fill="#bbb"/><rect x="7.5" y="5.5" width="9" height="11" fill="#444" stroke="#c0c0c0"/><circle cx="12" cy="11" r="2.5" fill="none" stroke="#c0c0c0" stroke-width="1.5"/></svg>
<svg class="a" style="left:31px;top:374px;" width="17" height="16" viewBox="0 0 17 16"><path d="M0.5 0V15.5H16.5" stroke="#c8c8c8" fill="none"/><rect x="3" y="7" width="3" height="8.5" fill="#c0c0c0"/><rect x="8" y="2.5" width="3" height="13" fill="#999"/><rect x="13" y="4.5" width="3" height="11" fill="#c0c0c0"/></svg>
<div class="a" style="left:0px;top:395px;width:54px;height:1px;background:#3a3a3a;"></div>
<div class="a" style="left:0px;top:396px;width:54px;height:1px;background:#535353;"></div>
<svg class="a" style="left:0px;top:399px;" width="20" height="19" viewBox="0 0 20 19"><rect x="3.5" y="4.5" width="11" height="9" fill="#7a7a7a" stroke="#d0d0d0"/><path d="M3.5 0V3M14.5 0V3M3.5 15V19M14.5 15V19M0 4.5H2M16 4.5H19M0 13.5H2M16 13.5H19" stroke="#ccc"/></svg>
<svg class="a" style="left:31px;top:401px;" width="18" height="14" viewBox="0 0 18 14"><path d="M0 14L9 6L10.5 8Z" fill="#c0c0c0"/><path d="M9 6L13 1H18L12.5 7.5Z" fill="#999"/><path d="M1 13.5L10 6.5" stroke="#222"/></svg>
<svg class="a" style="left:0px;top:423px;" width="18" height="18" viewBox="0 0 18 18"><g fill="#bdbdbd"><rect x="3.8" y="1.8" width="2.6" height="10" rx="1.3"/><rect x="7.6" y="0.6" width="2.6" height="10" rx="1.3"/><rect x="11.2" y="1.6" width="2.6" height="10" rx="1.3"/><rect x="14.5" y="4" width="2.4" height="8" rx="1.2"/><path d="M0.6 9.5Q1.5 8 3.5 9.5L6 12V9H16.5L14 17H6Z"/></g><path d="M3.8 2L6.4 2M7.6 0.8H10.2M11.2 1.8H13.8M14.5 4.2H16.9M0.8 9H3" stroke="#222" stroke-width="0.8"/><rect x="6" y="16" width="8" height="1.2" fill="#e0e0e0"/></svg>
<div class="a" style="left:25px;top:421px;width:28px;height:22px;background:#333333;border:1px solid #2a2a2a"></div>
<svg class="a" style="left:32px;top:424px;" width="16" height="17" viewBox="0 0 16 17"><circle cx="6" cy="6" r="5" fill="#6a6a6a" stroke="#b8b8b8" stroke-width="1.3"/><path d="M9.5 9.5L14.5 14.5" stroke="#b8b8b8" stroke-width="2.6" stroke-linecap="round"/></svg>
<div class="a" style="left:0px;top:445px;width:54px;height:1px;background:#3a3a3a;"></div>
<div class="a" style="left:0px;top:446px;width:54px;height:1px;background:#535353;"></div>
<svg class="a" style="left:38px;top:448px;" width="11" height="12" viewBox="0 0 11 12"><path d="M1 2.5H5.5Q8.5 2.5 8.5 5.5V10" stroke="#ccc" fill="none" stroke-width="1.1"/><path d="M0 2.5L3 0V5Z" fill="#ccc"/><path d="M6 8.5H11L8.5 11.5Z" fill="#ccc"/></svg>
<div class="a" style="left:12px;top:466px;width:36px;height:36px;background:#939598;border:1px solid #222;box-shadow:inset 0 0 0 1px #fff"></div>
<div class="a" style="left:21px;top:475px;width:18px;height:18px;background:#4a4a4a;border:1px solid #fff;box-shadow:inset 0 0 0 1px #222"></div>
<div class="a" style="left:-2px;top:448px;width:32px;height:36px;background:#939598;border:1px solid #222;box-shadow:inset 0 0 0 1px #fff"></div>
<svg class="a" style="left:0px;top:488px;" width="6" height="13" viewBox="0 0 6 13"><rect x="-4" y="1.5" width="8" height="8" fill="#444" stroke="#ccc"/><rect x="-1" y="5" width="5" height="6" fill="#fff" stroke="#222"/></svg>
<div class="a" style="left:0px;top:509px;width:15px;height:19px;background:#333;border:1px solid #2a2a2a;border-left:none"></div>
<div class="a" style="left:-2px;top:512px;width:14px;height:14px;background:#939598;border:1px solid #111"></div>
<div class="a" style="left:16px;top:509px;width:20px;height:19px;background:#555;border:1px solid #3c3c3c"></div>
<div class="a" style="left:19px;top:512px;width:14px;height:14px;background:linear-gradient(90deg,#2a7fd0,#6fb0e0 50%,#d8e8f5);border:1px solid #000"></div>
<div class="a" style="left:36px;top:509px;width:20px;height:19px;background:#555;border:1px solid #3c3c3c"></div>
<div class="a" style="left:39px;top:512px;width:14px;height:14px;background:#fff;border:1px solid #000"></div>
<svg class="a" style="left:40px;top:513px;" width="12" height="12" viewBox="0 0 12 12"><path d="M0.5 11.5L11.5 0.5" stroke="#ed1c24" stroke-width="1.8"/></svg>
<div class="a" style="left:0px;top:534px;width:15px;height:17px;background:#333;border:1px solid #2a2a2a;border-left:none"></div>
<div class="a" style="left:16px;top:534px;width:20px;height:17px;background:#555;border:1px solid #3c3c3c"></div>
<div class="a" style="left:36px;top:534px;width:20px;height:17px;background:#555;border:1px solid #3c3c3c"></div>
<svg class="a" style="left:1px;top:537px;" width="11" height="12" viewBox="0 0 11 12"><circle cx="4" cy="4.5" r="3.5" fill="none" stroke="#bbb" stroke-width="1.1"/><rect x="5" y="6" width="6" height="6" fill="#b0b0b0"/></svg>
<svg class="a" style="left:20px;top:537px;" width="12" height="12" viewBox="0 0 12 12"><circle cx="5" cy="5" r="4" fill="none" stroke="#bbb" stroke-width="1.1"/><path d="M11 7V12H6Z" fill="#bbb"/></svg>
<svg class="a" style="left:41px;top:538px;" width="10" height="10" viewBox="0 0 10 10"><circle cx="4.5" cy="4.5" r="3.8" fill="none" stroke="#bbb" stroke-width="1.1"/><rect x="5" y="5" width="4" height="4" fill="#bbb"/></svg>
<svg class="a" style="left:12px;top:559px;" width="22" height="18" viewBox="0 0 22 18"><rect x="0.5" y="4.5" width="13" height="12" fill="#666" stroke="#c8c8c8"/><rect x="6.5" y="0.5" width="15" height="12" fill="#777" stroke="#d0d0d0"/><rect x="7" y="1" width="14" height="2" fill="#bbb"/></svg>
<div class="a" style="left:246px;top:275px;width:268px;height:337px;background:#4a4a4a;border:1px solid #262626;border-radius:4px 4px 0 0;box-shadow:1px 1px 2px rgba(0,0,0,0.3)"></div>
<div class="a" style="left:247px;top:276px;width:266px;height:13px;background:linear-gradient(#313131,#2a2a2a);border-radius:3px 3px 0 0"></div>
<svg class="a" style="left:485px;top:280px;" width="8" height="6" viewBox="0 0 8 6"><path d="M0 3L3.5 0V6ZM4 3L7.5 0V6Z" fill="#c8c8c8"/></svg>
<svg class="a" style="left:502px;top:280px;" width="7" height="6" viewBox="0 0 7 6"><path d="M0.5 0.5L6 5.5M6 0.5L0.5 5.5" stroke="#d0d0d0" stroke-width="1.5"/></svg>
<div class="a" style="left:294px;top:289px;width:219px;height:17px;background:#2e2e2e;border-top:1px solid #3a3a3a"></div>
<div class="a" style="left:247px;top:289px;width:47px;height:17px;background:#4a4a4a;border-top:1px solid #5a5a5a"></div>
<div class="t" style="left:254.00px;top:292.54px;font-size:10px;color:#e8e8e8;font-weight:bold;transform:scaleX(1.0543);">Layers</div>
<svg class="a" style="left:495px;top:293px;" width="15" height="8" viewBox="0 0 15 8"><rect x="0" y="2" width="6" height="1" fill="#111"/><path d="M0 3H5.5L2.75 6Z" fill="#d8d8d8"/><rect x="6" y="0" width="8" height="1" fill="#111"/><rect x="6" y="1" width="8" height="1" fill="#d0d0d0"/><rect x="6" y="2" width="8" height="1" fill="#111"/><rect x="6" y="3" width="8" height="1" fill="#d0d0d0"/><rect x="6" y="4" width="8" height="1" fill="#111"/><rect x="6" y="5" width="8" height="1" fill="#d0d0d0"/><rect x="6" y="6" width="8" height="1" fill="#111"/><rect x="6" y="7" width="8" height="1" fill="#d0d0d0"/></svg>
<div class="a" style="left:252px;top:312px;width:256px;height:272px;background:#4a4a4a;border:1px solid #2a2a2a"></div>
<div class="a" style="left:253px;top:313px;width:254px;height:20px;background:#4b4b4b;"></div>
<div class="a" style="left:253px;top:333px;width:254px;height:1px;background:#2e2e2e;"></div>
<div class="a" style="left:273px;top:313px;width:1px;height:20px;background:#2e2e2e;"></div>
<div class="a" style="left:294px;top:313px;width:1px;height:20px;background:#2e2e2e;"></div>
<div class="a" style="left:300px;top:313px;width:1px;height:20px;background:#2e2e2e;"></div>
<div class="a" style="left:472px;top:313px;width:1px;height:20px;background:#2e2e2e;"></div>
<div class="a" style="left:296px;top:314px;width:3px;height:18px;background:#4f7fe8;"></div>
<svg class="a" style="left:256px;top:317px;" width="13" height="10" viewBox="0 0 13 10"><ellipse cx="6.2" cy="5" rx="5.6" ry="3.8" fill="#b4b4b4"/><path d="M1 4.5Q6.2 -0.5 11.4 4.5" stroke="#222" stroke-width="0.9" fill="none"/><ellipse cx="6.2" cy="5.3" rx="4" ry="2.6" fill="#9a9a9a"/><circle cx="6.2" cy="5.2" r="2.6" fill="#2e2e2e"/><rect x="6.8" y="3.4" width="1.6" height="1.6" fill="#d8d8d8"/></svg>
<div class="a" style="left:253px;top:334px;width:254px;height:20px;background:#535353;"></div>
<div class="a" style="left:253px;top:354px;width:254px;height:1px;background:#2e2e2e;"></div>
<div class="a" style="left:273px;top:334px;width:1px;height:20px;background:#2e2e2e;"></div>
<div class="a" style="left:294px;top:334px;width:1px;height:20px;background:#2e2e2e;"></div>
<div class="a" style="left:300px;top:334px;width:1px;height:20px;background:#2e2e2e;"></div>
<div class="a" style="left:472px;top:334px;width:1px;height:20px;background:#2e2e2e;"></div>
<div class="a" style="left:296px;top:335px;width:3px;height:18px;background:#4f7fe8;"></div>
<svg class="a" style="left:256px;top:338px;" width="13" height="10" viewBox="0 0 13 10"><ellipse cx="6.2" cy="5" rx="5.6" ry="3.8" fill="#b4b4b4"/><path d="M1 4.5Q6.2 -0.5 11.4 4.5" stroke="#222" stroke-width="0.9" fill="none"/><ellipse cx="6.2" cy="5.3" rx="4" ry="2.6" fill="#9a9a9a"/><circle cx="6.2" cy="5.2" r="2.6" fill="#2e2e2e"/><rect x="6.8" y="3.4" width="1.6" height="1.6" fill="#d8d8d8"/></svg>
<div class="a" style="left:253px;top:355px;width:254px;height:20px;background:#535353;"></div>
<div class="a" style="left:253px;top:375px;width:254px;height:1px;background:#2e2e2e;"></div>
<div class="a" style="left:273px;top:355px;width:1px;height:20px;background:#2e2e2e;"></div>
<div class="a" style="left:294px;top:355px;width:1px;height:20px;background:#2e2e2e;"></div>
<div class="a" style="left:300px;top:355px;width:1px;height:20px;background:#2e2e2e;"></div>
<div class="a" style="left:472px;top:355px;width:1px;height:20px;background:#2e2e2e;"></div>
<div class="a" style="left:296px;top:356px;width:3px;height:18px;background:#4f7fe8;"></div>
<svg class="a" style="left:256px;top:359px;" width="13" height="10" viewBox="0 0 13 10"><ellipse cx="6.2" cy="5" rx="5.6" ry="3.8" fill="#b4b4b4"/><path d="M1 4.5Q6.2 -0.5 11.4 4.5" stroke="#222" stroke-width="0.9" fill="none"/><ellipse cx="6.2" cy="5.3" rx="4" ry="2.6" fill="#9a9a9a"/><circle cx="6.2" cy="5.2" r="2.6" fill="#2e2e2e"/><rect x="6.8" y="3.4" width="1.6" height="1.6" fill="#d8d8d8"/></svg>
<svg class="a" style="left:305px;top:321px;" width="9" height="7" viewBox="0 0 9 7"><path d="M0 0H8.5L4.25 6.5Z" fill="#d8d8d8"/></svg>
<div class="a" style="left:322px;top:314px;width:18px;height:18px;background:#fff;border:1px solid #000"></div>
<svg class="a" style="left:323px;top:315px;" width="16" height="16" viewBox="0 0 16 16"><polygon points="9.5,1.5 14,1.5 15.5,5 14,8.5 9.5,8.5 8,5" fill="#939598"/><polygon points="5.5,6 10,9.5 8.5,14.5 2.5,14.5 1,9.5" fill="#ed1c24"/></svg>
<div class="t" style="left:345.00px;top:317.54px;font-size:10px;color:#e6e6e6;transform:scaleX(0.9895);">Layer 1</div>
<div class="a" style="left:342px;top:335px;width:18px;height:18px;background:#fff;border:1px solid #000"></div>
<svg class="a" style="left:343px;top:336px;" width="16" height="16" viewBox="0 0 16 16"><polygon points="4.5,1.5 11.5,1.5 15,8 11.5,14.5 4.5,14.5 1,8" fill="#939598"/></svg>
<div class="t" style="left:366.00px;top:338.54px;font-size:10px;color:#e6e6e6;transform:scaleX(1.0233);">&lt;Path&gt;</div>
<div class="a" style="left:342px;top:356px;width:18px;height:18px;background:#fff;border:1px solid #000"></div>
<svg class="a" style="left:343px;top:357px;" width="16" height="16" viewBox="0 0 16 16"><polygon points="8,0.5 15,5.5 12.5,15 3.5,15 1,5.5" fill="#ed1c24"/></svg>
<div class="t" style="left:366.00px;top:359.54px;font-size:10px;color:#e6e6e6;transform:scaleX(1.0233);">&lt;Path&gt;</div>
<svg class="a" style="left:502px;top:313px;" width="6" height="6" viewBox="0 0 6 6"><path d="M0 0H5.5V5.5Z" fill="#d8d8d8"/></svg>
<svg class="a" style="left:476px;top:317px;" width="13" height="13" viewBox="0 0 13 13"><circle cx="6.5" cy="6.5" r="4.3" fill="none" stroke="#c8c8c8" stroke-width="1.1"/></svg>
<div class="a" style="left:493px;top:320px;width:6px;height:6px;background:#4f86f7;border:1px solid #000"></div>
<svg class="a" style="left:475px;top:337px;" width="15" height="15" viewBox="0 0 15 15"><circle cx="7.5" cy="7.5" r="6.2" fill="none" stroke="#c8c8c8" stroke-width="1.1"/><circle cx="7.5" cy="7.5" r="4" fill="none" stroke="#c8c8c8" stroke-width="1.1"/></svg>
<div class="a" style="left:493px;top:340px;width:8px;height:8px;background:#4f86f7;border:1px solid #000"></div>
<svg class="a" style="left:476px;top:358px;" width="13" height="13" viewBox="0 0 13 13"><circle cx="6.5" cy="6.5" r="4.3" fill="none" stroke="#c8c8c8" stroke-width="1.1"/></svg>
<div class="t" style="left:253.00px;top:588.53px;font-size:10px;color:#e6e6e6;transform:scaleX(0.9295);">1 Layer</div>
<svg class="a" style="left:370px;top:587px;" width="13" height="13" viewBox="0 0 13 13"><circle cx="7.5" cy="5" r="4.2" fill="none" stroke="#c8c8c8" stroke-width="1.4"/><path d="M4.5 8L0.8 11.8" stroke="#c8c8c8" stroke-width="1.8"/></svg>
<svg class="a" style="left:396px;top:587px;" width="12" height="12" viewBox="0 0 12 12"><rect x="0.5" y="0.5" width="7" height="7" fill="none" stroke="#6a6a6a"/><rect x="3.5" y="3.5" width="8" height="8" fill="none" stroke="#6a6a6a"/></svg>
<svg class="a" style="left:421px;top:588px;" width="14" height="11" viewBox="0 0 14 11"><path d="M0 2H5V5H2Z" fill="#6a6a6a"/><rect x="6" y="1" width="8" height="9" fill="#6a6a6a"/><path d="M1 4H5M3 2L5 4L3 6" stroke="#555" fill="none"/></svg>
<svg class="a" style="left:448px;top:588px;" width="11" height="11" viewBox="0 0 11 11"><defs><linearGradient id="ln" x1="0" y1="0" x2="0" y2="1"><stop offset="0" stop-color="#eee"/><stop offset="1" stop-color="#aaa"/></linearGradient></defs><path d="M0 0H11V11H5V6H0Z" fill="url(#ln)"/><path d="M0 7L4 11V7Z" fill="#ddd"/></svg>
<svg class="a" style="left:474px;top:587px;" width="11" height="12" viewBox="0 0 11 12"><path d="M0.5 2.5H10.5M4 2V0.8H7V2" stroke="#6a6a6a" fill="none"/><path d="M1.5 3.5H9.5L9 11.5H2Z" fill="none" stroke="#6a6a6a"/><path d="M4 5V10.5M5.5 5V10.5M7 5V10.5" stroke="#6a6a6a"/></svg>
<div class="a" style="left:502px;top:594px;width:9px;height:9px;background:repeating-conic-gradient(#8a8a8a 0 25%,transparent 0 50%) 0 0/2px 2px;clip-path:polygon(100% 0,100% 100%,0 100%)"></div>
<div class="a" style="left:247px;top:603px;width:266px;height:1px;background:#2a2a2a;"></div>
<div class="a" style="left:247px;top:604px;width:266px;height:7px;background:#484848;"></div>
<div class="a" style="left:370px;top:605px;width:19px;height:3px;background:repeating-linear-gradient(90deg,#111 0 1px,transparent 1px 2px)"></div>
<div class="a" style="left:904px;top:141px;width:130px;height:152px;background:#4a4a4a;border:1px solid #262626;border-radius:4px 0 0 0;box-shadow:0 1px 2px rgba(0,0,0,0.3)"></div>
<div class="a" style="left:905px;top:142px;width:119px;height:13px;background:linear-gradient(#2f2f2f,#2a2a2a);border-radius:3px 0 0 0"></div>
<div class="a" style="left:905px;top:154px;width:119px;height:1px;background:#3a3a3a;"></div>
<div class="a" style="left:905px;top:155px;width:119px;height:16px;background:#303030;"></div>
<div class="a" style="left:905px;top:155px;width:61px;height:16px;background:#3a3a3a;"></div>
<div class="t" style="left:912.00px;top:158.53px;font-size:10px;color:#a8a8a8;font-weight:bold;">Swatches</div>
<div class="a" style="left:966px;top:155px;width:53px;height:17px;background:#4a4a4a;border-top:1px solid #585858"></div>
<div class="t" style="left:973.00px;top:158.53px;font-size:10px;color:#e8e8e8;font-weight:bold;transform:scaleX(0.9748);">Brushes</div>
<div class="a" style="left:1019px;top:155px;width:5px;height:16px;background:#353535;border-left:1px solid #222"></div>
<div class="a" style="left:910px;top:178px;width:114px;height:87px;background:#555555;"></div>
<div class="a" style="left:911px;top:179px;width:32px;height:32px;background:#e4e4e4;"></div>
<div class="a" style="left:944px;top:179px;width:32px;height:32px;background:#e4e4e4;"></div>
<div class="a" style="left:977px;top:179px;width:32px;height:32px;background:#e4e4e4;"></div>
<div class="a" style="left:1010px;top:179px;width:14px;height:32px;background:#e4e4e4;"></div>
<svg class="a" style="left:911px;top:179px;" width="113" height="32" viewBox="0 0 113 32"><circle cx="16" cy="16" r="2.7" fill="#000"/><circle cx="49" cy="16" r="7.6" fill="#000"/><path d="M80.5 17L83.5 15" stroke="#000" stroke-width="1.3"/><path d="M112.5 17L113 16" stroke="#000"/></svg>
<div class="a" style="left:911px;top:212px;width:113px;height:32px;background:#e4e4e4;"></div>
<div class="a" style="left:916px;top:227px;width:108px;height:2px;background:#000;"></div>
<div class="a" style="left:916px;top:229px;width:108px;height:1px;background:#777;"></div>
<div class="a" style="left:911px;top:245px;width:113px;height:20px;background:#e4e4e4;"></div>
<svg class="a" style="left:911px;top:245px;" width="113" height="20" viewBox="0 0 113 20"><path d="M7 13.5C20 13 30 15 45 14C60 15 75 13 90 14.5C100 14 108 15 113 14" stroke="#000" stroke-width="3.2" fill="none"/><path d="M10 12.5L30 12.8M50 12.6L70 12.4M85 13L105 12.8M14 16.3L40 16M60 16.2L95 16.5" stroke="#000" stroke-width="1" fill="none" stroke-dasharray="3 1 5 2"/></svg>
<svg class="a" style="left:913px;top:268px;" width="19" height="12" viewBox="0 0 19 12"><rect x="0.5" y="1" width="2" height="10" fill="#bbb"/><rect x="3.5" y="0" width="2" height="11" fill="#ccc"/><path d="M6.5 1L10 11H8Z" fill="#bbb"/><path d="M12 8H17L14.5 10.5Z" fill="#ddd"/></svg>
<div class="a" style="left:905px;top:284px;width:119px;height:1px;background:#2a2a2a;"></div>
<div class="a" style="left:905px;top:285px;width:119px;height:7px;background:#484848;"></div>
<div class="a" style="left:1015px;top:287px;width:9px;height:3px;background:repeating-linear-gradient(90deg,#111 0 1px,transparent 1px 2px)"></div>
<svg class="a" style="left:24px;top:747px;" width="19" height="19" viewBox="0 0 19 19"><g stroke="#36466a" stroke-width="1.5" fill="#8d9cb8"><path d="M4 2.5Q7 1 10 2.5L9 8Q6 6.8 3 8Z"/><path d="M11 3Q14 4.5 18 3L17 9Q13.8 10.2 10 9Z"/><path d="M2.5 9.5Q5.5 8.2 8.7 9.5L7.7 15Q4.7 13.8 1.5 15Z"/><path d="M9.8 10Q13 11.5 16.8 10L15.8 16Q12.8 17.2 9 16Z"/></g></svg>
<svg class="a" style="left:72px;top:749px;" width="16" height="13" viewBox="0 0 16 13"><defs><linearGradient id="fo" x1="0" y1="0" x2="0" y2="1"><stop offset="0" stop-color="#fff3b0"/><stop offset="1" stop-color="#e0b030"/></linearGradient></defs><path d="M0.5 2.5H5L6.5 4H13.5V12.5H0.5Z" fill="#d8a020" stroke="#9a7010" stroke-width="0.8"/><path d="M0.5 6H15L13.5 12.5H0.5Z" fill="url(#fo)" stroke="#9a7010" stroke-width="0.8"/></svg>
<div class="t" style="left:92.00px;top:751.53px;font-size:10px;color:#ffffff;transform:scaleX(0.9000);">C.</div>
<svg class="a" style="left:123px;top:749px;" width="16" height="13" viewBox="0 0 16 13"><defs><linearGradient id="fo" x1="0" y1="0" x2="0" y2="1"><stop offset="0" stop-color="#fff3b0"/><stop offset="1" stop-color="#e0b030"/></linearGradient></defs><path d="M0.5 2.5H5L6.5 4H13.5V12.5H0.5Z" fill="#d8a020" stroke="#9a7010" stroke-width="0.8"/><path d="M0.5 6H15L13.5 12.5H0.5Z" fill="url(#fo)" stroke="#9a7010" stroke-width="0.8"/></svg>
<div class="t" style="left:143.00px;top:751.53px;font-size:10px;color:#ffffff;transform:scaleX(0.9000);">C.</div>
<svg class="a" style="left:174px;top:749px;" width="16" height="13" viewBox="0 0 16 13"><defs><linearGradient id="fo" x1="0" y1="0" x2="0" y2="1"><stop offset="0" stop-color="#fff3b0"/><stop offset="1" stop-color="#e0b030"/></linearGradient></defs><path d="M0.5 2.5H5L6.5 4H13.5V12.5H0.5Z" fill="#d8a020" stroke="#9a7010" stroke-width="0.8"/><path d="M0.5 6H15L13.5 12.5H0.5Z" fill="url(#fo)" stroke="#9a7010" stroke-width="0.8"/><circle cx="8" cy="7.5" r="3.5" fill="#bfe6f7" stroke="#8aa" stroke-width="0.8"/><path d="M10.5 10L13 13" stroke="#c86" stroke-width="1.5"/></svg>
<div class="t" style="left:194.00px;top:751.53px;font-size:10px;color:#ffffff;transform:scaleX(0.9000);">C.</div>
<svg class="a" style="left:225px;top:749px;" width="16" height="13" viewBox="0 0 16 13"><defs><linearGradient id="fo" x1="0" y1="0" x2="0" y2="1"><stop offset="0" stop-color="#fff3b0"/><stop offset="1" stop-color="#e0b030"/></linearGradient></defs><path d="M0.5 2.5H5L6.5 4H13.5V12.5H0.5Z" fill="#d8a020" stroke="#9a7010" stroke-width="0.8"/><path d="M0.5 6H15L13.5 12.5H0.5Z" fill="url(#fo)" stroke="#9a7010" stroke-width="0.8"/><circle cx="8" cy="7.5" r="3.5" fill="#bfe6f7" stroke="#8aa" stroke-width="0.8"/><path d="M10.5 10L13 13" stroke="#c86" stroke-width="1.5"/></svg>
<div class="t" style="left:245.00px;top:751.53px;font-size:10px;color:#ffffff;transform:scaleX(0.9000);">D.</div>
<svg class="a" style="left:277px;top:748px;" width="15" height="15" viewBox="0 0 15 15"><circle cx="7.5" cy="7.5" r="7" fill="#db4437"/><path d="M7.5 7.5L13.6 4A7 7 0 0 1 10.5 13.8Z" fill="#f4c20d"/><path d="M7.5 7.5L10.5 13.8A7 7 0 0 1 1.4 4Z" fill="#0f9d58"/><circle cx="7.5" cy="7.5" r="3.3" fill="#fff"/><circle cx="7.5" cy="7.5" r="2.5" fill="#4285f4"/></svg>
<div class="t" style="left:297.00px;top:751.53px;font-size:10px;color:#ffffff;transform:scaleX(1.2005);">[..</div>
<svg class="a" style="left:327px;top:748px;" width="16" height="15" viewBox="0 0 16 15"><rect x="0" y="0" width="16" height="15" fill="#0a2a60"/><rect x="1" y="1" width="14" height="13" fill="#1f4d96"/></svg>
<div class="t" style="left:329.00px;top:752.23px;font-size:8px;color:#c8e0ff;font-weight:bold;transform:scaleX(1.0221);">Ps</div>
<div class="t" style="left:347.00px;top:751.53px;font-size:10px;color:#ffffff;transform:scaleX(0.9524);">A.</div>
<svg class="a" style="left:378px;top:748px;" width="16" height="16" viewBox="0 0 16 16"><circle cx="8" cy="8" r="7.5" fill="#3a9a20"/><circle cx="8" cy="8" r="5.5" fill="#7ac943"/><path d="M5 12L9 4L11 5L7 12Z" fill="#fff"/></svg>
<div class="t" style="left:398.00px;top:751.53px;font-size:10px;color:#ffffff;transform:scaleX(0.9000);">C.</div>
<svg class="a" style="left:431px;top:747px;" width="12" height="17" viewBox="0 0 12 17"><rect x="0.5" y="0.5" width="11" height="16" fill="#b8c8e0" stroke="#6a7a98"/><rect x="2" y="2" width="8" height="3" fill="#eef"/><path d="M2.5 7H9.5M2.5 10H9.5M2.5 13H9.5" stroke="#6a7ab0" stroke-dasharray="1.5 1"/></svg>
<div class="t" style="left:448.00px;top:751.53px;font-size:10px;color:#ffffff;transform:scaleX(0.9524);">K.</div>
<svg class="a" style="left:480px;top:749px;" width="15" height="13" viewBox="0 0 15 13"><path d="M1 7L7 1L14 7L7 13Z" fill="#2040c0"/><path d="M3 3L12 11" stroke="#e02020" stroke-width="3"/><path d="M12 3L3 11" stroke="#20a020" stroke-width="3"/><circle cx="7.5" cy="7" r="2" fill="#ffd000"/></svg>
<div class="t" style="left:499.00px;top:751.53px;font-size:10px;color:#ffffff;transform:scaleX(1.0417);">c..</div>
<svg class="a" style="left:532px;top:749px;" width="17" height="12" viewBox="0 0 17 12"><rect x="0" y="0" width="17" height="12" fill="#000"/><rect x="1.5" y="1.5" width="14" height="9" fill="#fff"/></svg>
<div class="t" style="left:534.00px;top:751.38px;font-size:9px;color:#000;font-weight:bold;transform:scaleX(1.2626);">7z</div>
<div class="t" style="left:553.00px;top:751.53px;font-size:10px;color:#ffffff;transform:scaleX(0.9000);">D.</div>
<svg class="a" style="left:584px;top:747px;" width="16" height="16" viewBox="0 0 16 16"><rect x="0" y="0" width="16" height="16" fill="#1a3a90"/><path d="M2 2V14M14 2V14" stroke="#90c0ff" stroke-dasharray="1 1.2" stroke-width="1.5"/><rect x="4" y="3" width="8" height="10" fill="#2060d0"/></svg>
<div class="t" style="left:604.00px;top:751.53px;font-size:10px;color:#ffffff;transform:scaleX(1.2360);">{..</div>
<svg class="a" style="left:636px;top:748px;" width="16" height="16" viewBox="0 0 16 16"><path d="M2.5 0.5H11L14.5 4V15.5H2.5Z" fill="#fff" stroke="#999"/><rect x="0" y="2" width="9" height="4" fill="#b01818"/><path d="M5 13C7 9 8 6 8 4C9 7 11 10 13 11C10 11 7 12 5 13Z" fill="none" stroke="#d02020" stroke-width="1.2"/></svg>
<div class="t" style="left:656.00px;top:751.53px;font-size:10px;color:#ffffff;transform:scaleX(0.9524);">A.</div>
<div class="a" style="left:679px;top:746px;width:49px;height:20px;background:linear-gradient(#7d8fb5,#6a7ca6);border:1px solid #4a5a80;border-radius:5px;box-shadow:inset 0 1px 0 rgba(255,255,255,0.25)"></div>
<div class="a" style="left:689px;top:749px;width:16px;height:15px;background:#2b1a05;border:1px solid #f0a030"></div>
<div class="t" style="left:691.00px;top:752.38px;font-size:9px;color:#f0a030;font-weight:bold;transform:scaleX(1.2222);">Ai</div>
<div class="t" style="left:709.00px;top:751.53px;font-size:10px;color:#ffffff;transform:scaleX(0.9000);">U.</div>
<svg class="a" style="left:740px;top:748px;" width="16" height="16" viewBox="0 0 16 16"><rect x="0.5" y="0.5" width="15" height="15" fill="#889" stroke="#445"/><rect x="2" y="2" width="8" height="8" fill="#30c0c0"/><rect x="4" y="4" width="8" height="8" fill="#f0f020"/><rect x="6" y="6" width="9" height="9" fill="#f020e0"/></svg>
<div class="t" style="left:760.00px;top:751.53px;font-size:10px;color:#ffffff;transform:scaleX(0.9812);">E..</div>
<svg class="a" style="left:792px;top:747px;" width="16" height="16" viewBox="0 0 16 16"><rect x="0" y="0" width="16" height="16" fill="#1a3a90"/><path d="M2 2V14M14 2V14" stroke="#90c0ff" stroke-dasharray="1 1.2" stroke-width="1.5"/><rect x="4" y="3" width="8" height="10" fill="#2060d0"/></svg>
<div class="t" style="left:812.00px;top:751.53px;font-size:10px;color:#ffffff;transform:scaleX(1.2360);">{..</div>
<div class="a" style="left:843px;top:748px;width:13px;height:16px;background:#6e83ad;"></div>
<div class="t" style="left:844.00px;top:751.53px;font-size:10px;color:#fff;transform:scaleX(0.8639);">EN</div>
<div class="a" style="left:862px;top:746px;width:160px;height:20px;background:linear-gradient(#97aacd,#8497c0);border:1px solid #5b6d96;border-radius:7px;box-shadow:inset 1px 1px 0 rgba(255,255,255,0.3)"></div>
<svg class="a" style="left:871px;top:748px;" width="15" height="15" viewBox="0 0 15 15"><rect x="0.5" y="0.5" width="14" height="14" fill="#f4f4f4" stroke="#aaa"/><path d="M3 12C5 8 7 5 7 3C8 6 9 9 12 10C9 10 6 11 3 12Z" fill="none" stroke="#d02020" stroke-width="1.2"/><circle cx="12" cy="3" r="1.5" fill="none" stroke="#d02020" stroke-width="0.8"/></svg>
<svg class="a" style="left:888px;top:748px;" width="16" height="16" viewBox="0 0 16 16"><g fill="#3aaa30"><circle cx="8" cy="3" r="2.8"/><circle cx="12.8" cy="6.5" r="2.8"/><circle cx="11" cy="12.3" r="2.8"/><circle cx="5" cy="12.3" r="2.8"/><circle cx="3.2" cy="6.5" r="2.8"/></g><circle cx="3.2" cy="9" r="2.5" fill="#e03020"/><circle cx="8" cy="8" r="2.8" fill="#ffe020"/></svg>
<svg class="a" style="left:906px;top:748px;" width="17" height="15" viewBox="0 0 17 15"><rect x="0" y="0" width="17" height="15" fill="#e00000"/><path d="M8 2A5.5 5.5 0 1 0 13 9" fill="none" stroke="#eee" stroke-width="2.8"/><path d="M9 13A5.5 5.5 0 0 0 5 4" fill="none" stroke="#bbb" stroke-width="1.5"/></svg>
<svg class="a" style="left:925px;top:748px;" width="15" height="15" viewBox="0 0 15 15"><path d="M1 5H4L9 1V14L4 10H1Z" fill="#d06030" stroke="#222" stroke-width="0.8"/><path d="M11 4Q13 7.5 11 11M13 2Q16 7.5 13 13" stroke="#222" fill="none" stroke-width="1"/></svg>
<svg class="a" style="left:942px;top:750px;" width="16" height="11" viewBox="0 0 16 11"><rect x="0" y="0" width="16" height="11" fill="#76b900"/><path d="M2 6Q8 -1 15 6Q8 11 2 6Z" fill="none" stroke="#cfe8a0" stroke-width="1"/><path d="M5 6Q8 3 11 6" fill="none" stroke="#cfe8a0"/></svg>
<svg class="a" style="left:961px;top:747px;" width="16" height="17" viewBox="0 0 16 17"><circle cx="7" cy="7" r="6.5" fill="#888" stroke="#444"/><circle cx="7" cy="7" r="3.5" fill="#aaa" stroke="#333"/><path d="M8 15L15 9" stroke="#7070d0" stroke-width="1.5"/></svg>
<div class="t" style="left:983.00px;top:750.69px;font-size:11px;color:#ffffff;transform:scaleX(0.9447);">10:51</div>
</body></html>
